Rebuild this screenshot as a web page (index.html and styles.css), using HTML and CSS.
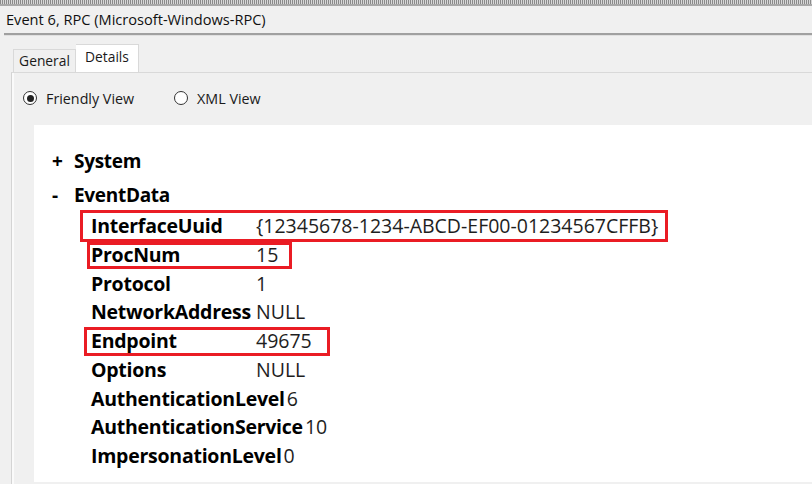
FILE: index.html
```html
<!DOCTYPE html>
<html lang="en">
<head>
  <meta charset="UTF-8" />
  <title>Event 6, RPC</title>
  <link rel="stylesheet" href="styles.css">
</head>
<body>

  <div class="dots"></div>
  <div class="title">Event 6, RPC (Microsoft-Windows-RPC)</div>

  <div class="tabs">
    <span class="tab">General</span>
    <span class="tab active">Details</span>
  </div>

  <div class="panel">
    <div class="views">
      <label class="radio"><span class="circle checked"></span>Friendly View</label>
      <label class="radio"><span class="circle"></span>XML View</label>
    </div>

    <div class="tree">
      <div class="node"><span class="sign">+</span>System</div>
      <div class="node"><span class="sign">-</span>EventData</div>

      <div class="rows">
        <div class="row"><span class="key">InterfaceUuid</span><span class="val">{12345678-1234-ABCD-EF00-01234567CFFB}</span><span class="mark mark-uuid"></span></div>
        <div class="row"><span class="key">ProcNum</span><span class="val">15</span><span class="mark mark-proc"></span></div>
        <div class="row"><span class="key">Protocol</span><span class="val">1</span></div>
        <div class="row"><span class="key">NetworkAddress</span><span class="val">NULL</span></div>
        <div class="row"><span class="key">Endpoint</span><span class="val">49675</span><span class="mark mark-end"></span></div>
        <div class="row"><span class="key">Options</span><span class="val">NULL</span></div>
        <div class="row"><span class="key">AuthenticationLevel</span><span class="val">6</span></div>
        <div class="row"><span class="key">AuthenticationService</span><span class="val">10</span></div>
        <div class="row"><span class="key">ImpersonationLevel</span><span class="val">0</span></div>
      </div>
    </div>
  </div>

</body>
</html>
```

FILE: styles.css
```css
body {
  margin: 0;
  width: 812px;
  height: 484px;
  overflow: hidden;
  background-color: #f0f0f0;
  font-family: 'Open Sans', 'Noto Sans', sans-serif;
  color: #000;
}

.dots {
  height: 4px;
  background: repeating-linear-gradient(90deg, #8a8a8a 0 1px, #d8d8d8 1px 2px);
  border-bottom: 2px solid #a8a8a8;
}

.title {
  margin-left: 4px;
  height: 27px;
  padding-left: 2px;
  font-size: 14.6px;
  line-height: 27px;
  color: #111;
  border-bottom: 2px solid #a0a0a0;
  box-shadow: 0 1px 0 #e0e0e0;
}

.tabs {
  display: flex;
  align-items: flex-end;
  height: 37px;
  margin-left: 13px;
}

.tab {
  width: 63px;
  height: 23px;
  box-sizing: border-box;
  border: 1px solid #d9d9d9;
  border-bottom: none;
  font-size: 13.8px;
  line-height: 22px;
  text-align: center;
  color: #1a1a1a;
}

.tab.active {
  height: 28px;
  background: #fff;
  line-height: 24px;
  border-left: none;
}

.panel {
  margin-left: 11px;
  height: 411px;
  border-top: 1px solid #d9d9d9;
  border-left: 1px solid #d4d4d4;
  box-shadow: inset 2px 0 0 #fafafa;
}

.views {
  display: flex;
  align-items: center;
  height: 50px;
  padding: 0 0 2px 11px;
  font-size: 14.3px;
  color: #1a1a1a;
}

.radio {
  display: flex;
  align-items: center;
  gap: 9px;
  margin-right: 40px;
}

.circle {
  width: 14px;
  height: 14px;
  box-sizing: border-box;
  border: 1px solid #333;
  border-radius: 50%;
  background: #fff;
  display: flex;
  align-items: center;
  justify-content: center;
}

.circle.checked::after {
  content: '';
  width: 7px;
  height: 7px;
  border-radius: 50%;
  background: #222;
}

.tree {
  margin-left: 22px;
  height: 357px;
  background: #fff;
  padding: 22px 0 0 18px;
  box-sizing: border-box;
}

.node {
  display: flex;
  font-size: 19px;
  font-weight: 700;
  height: 34px;
  line-height: 28px;
  letter-spacing: -0.3px;
}

.sign {
  width: 22px;
}

.rows {
  padding-left: 39px;
  margin-top: -3px;
}

.row {
  position: relative;
  display: flex;
  height: 28.75px;
  line-height: 28.75px;
  font-size: 19.5px;
}

.key {
  min-width: 163px;
  padding-right: 2px;
  font-weight: 700;
  letter-spacing: -0.25px;
}

.val {
  color: #1e1e1e;
}

.mark {
  position: absolute;
  box-sizing: border-box;
  border: 3px solid #ea1c24;
}

.mark-uuid { left: -11px; top: -2px; width: 588px; height: 32px; }
.mark-proc { left: -4px; top: 1px; width: 205px; height: 27px; }
.mark-end { left: -7px; top: 0; width: 246px; height: 29px; }
```
